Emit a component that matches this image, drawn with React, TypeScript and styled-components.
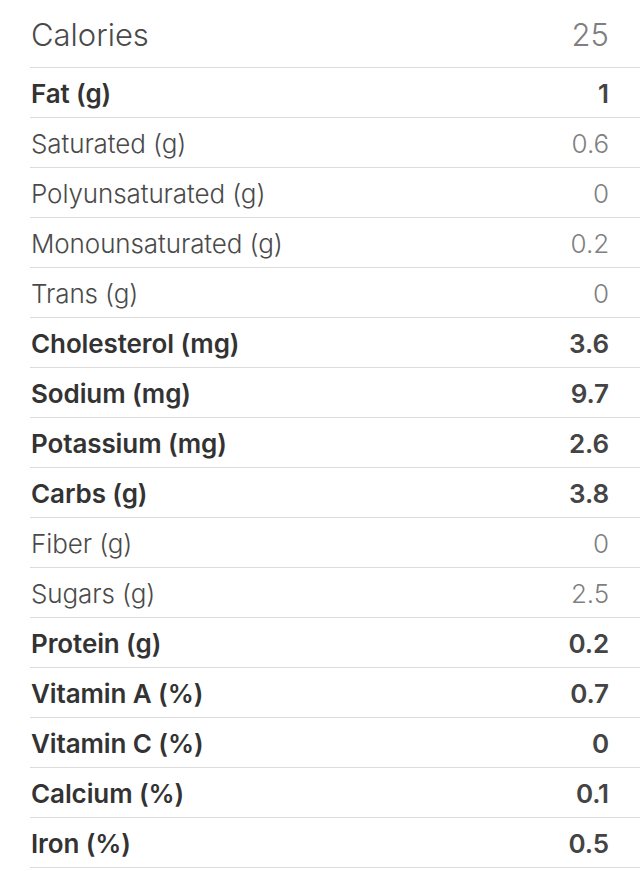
import React from "react";
import styled, { createGlobalStyle } from "styled-components";

const Global = createGlobalStyle`
  html, body { margin: 0; padding: 0; background: #ffffff; }
  body { font-family: "Inter", "Liberation Sans", sans-serif; -webkit-font-smoothing: antialiased; }
`;

const List = styled.div`
  display: flex;
  flex-direction: column;
  width: 640px;
  background: #ffffff;
`;

const Header = styled.div`
  display: flex;
  justify-content: space-between;
  align-items: center;
  height: 65px;
  padding: 2px 31px 0 0;
  margin-left: 30px;
  border-bottom: 1px solid #dddddd;
  font-size: 31px;
  font-weight: 300;
  color: #4a4a4a;
`;

const Row = styled.div<{ $bold?: boolean }>`
  display: flex;
  justify-content: space-between;
  align-items: center;
  height: 47px;
  padding: 2px 31px 0 0;
  margin-left: 30px;
  border-bottom: 1px solid #dddddd;
  font-size: 26px;
  font-weight: ${(p) => (p.$bold ? 600 : 300)};
  color: ${(p) => (p.$bold ? "#333333" : "#4a4a4a")};
  letter-spacing: -0.1px;
`;

const Label = styled.span`
  padding-left: 1px;
`;

const Value = styled.span<{ $bold?: boolean }>`
  color: ${(p) => (p.$bold ? "#444444" : "#7f7f7f")};
`;

const rows: { label: string; value: string; bold: boolean }[] = [
  { label: "Fat (g)", value: "1", bold: true },
  { label: "Saturated (g)", value: "0.6", bold: false },
  { label: "Polyunsaturated (g)", value: "0", bold: false },
  { label: "Monounsaturated (g)", value: "0.2", bold: false },
  { label: "Trans (g)", value: "0", bold: false },
  { label: "Cholesterol (mg)", value: "3.6", bold: true },
  { label: "Sodium (mg)", value: "9.7", bold: true },
  { label: "Potassium (mg)", value: "2.6", bold: true },
  { label: "Carbs (g)", value: "3.8", bold: true },
  { label: "Fiber (g)", value: "0", bold: false },
  { label: "Sugars (g)", value: "2.5", bold: false },
  { label: "Protein (g)", value: "0.2", bold: true },
  { label: "Vitamin A (%)", value: "0.7", bold: true },
  { label: "Vitamin C (%)", value: "0", bold: true },
  { label: "Calcium (%)", value: "0.1", bold: true },
  { label: "Iron (%)", value: "0.5", bold: true },
];

export default function App() {
  return (
    <List>
      <Global />
      <Header>
        <Label>Calories</Label>
        <Value>25</Value>
      </Header>
      {rows.map((r) => (
        <Row key={r.label} $bold={r.bold}>
          <Label>{r.label}</Label>
          <Value $bold={r.bold}>{r.value}</Value>
        </Row>
      ))}
    </List>
  );
}
